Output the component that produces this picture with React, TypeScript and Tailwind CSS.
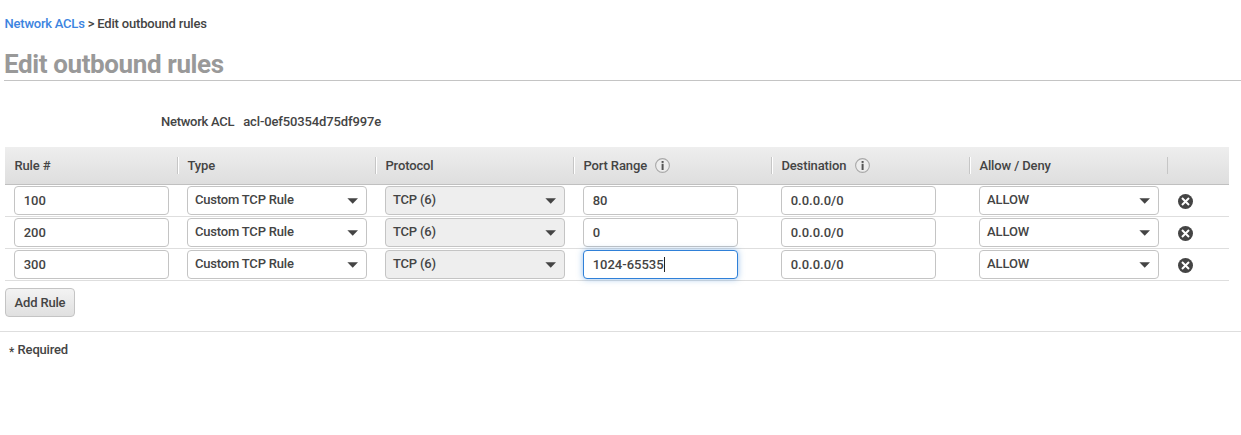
import React from 'react';

const rules = [
  { id: '100', port: '80', focused: false },
  { id: '200', port: '0', focused: false },
  { id: '300', port: '1024-65535', focused: true },
];

const GRID = 'grid w-[1224px] grid-cols-[173px_198px_198px_198px_198px_198px_61px]';

function InfoIcon() {
  return (
    <svg className="ml-[8.4px] size-[15px]" viewBox="0 0 15 15" fill="none">
      <circle cx="7.5" cy="7.5" r="6.9" fill="#ededed" stroke="#a8a8a8" strokeWidth="1.1" />
      <rect x="6.6" y="3" width="2" height="1.9" fill="#555" />
      <path d="M6.6 5.8H8.6V12H6.6Z" fill="#555" />
    </svg>
  );
}

function RemoveIcon() {
  return (
    <svg className="size-[15px]" viewBox="0 0 15 15" fill="none">
      <circle cx="7.5" cy="7.5" r="7.5" fill="#444" />
      <path d="M4 4L11 11M11 4L4 11" stroke="#fff" strokeWidth="2" />
    </svg>
  );
}

function HeaderCell({ label, info, separator = 'full' }: { label: string; info?: boolean; separator?: 'full' | 'gray' | 'none' }) {
  return (
    <div className="flex items-center pl-[9.4px] text-[13px] leading-[16px] tracking-[-0.12px]">
      <span>{label}</span>
      {info && <InfoIcon />}
      {separator !== 'none' && (
        <span
          className={`ml-auto h-[17px] w-px bg-[#c6c6c6] ${separator === 'full' ? 'shadow-[1px_0_0_#fff]' : ''}`}
        />
      )}
    </div>
  );
}

function Field({ value, focused }: { value: string; focused?: boolean }) {
  return (
    <div className="pl-[9px] pt-px">
      <div
        className={`flex h-[29px] w-[155px] items-center rounded-[4px] border bg-white pl-[8.7px] text-[13px] leading-[16px] ${
          focused ? 'border-[#2f80d8] shadow-[0_0_6px_rgba(47,128,216,0.5)]' : 'border-[#c4c4c4]'
        }`}
      >
        <span>{value}</span>
        {focused && <span className="h-[15px] w-px bg-[#222]" />}
      </div>
    </div>
  );
}

function Select({ value, disabled }: { value: string; disabled?: boolean }) {
  return (
    <div className="pl-[9px] pt-px">
      <div
        className={`flex h-[29px] w-[180px] items-center justify-between rounded-[4px] border border-[#c4c4c4] pl-[7px] pr-2 text-[13px] leading-[16px] ${
          disabled ? 'bg-[#eee]' : 'bg-white'
        }`}
      >
        <span className={value === 'ALLOW' ? '-mt-0.5 tracking-[-0.1px]' : '-mt-0.5 tracking-[-0.2px]'}>{value}</span>
        <svg className="mt-px h-[6px] w-[11px]" viewBox="0 0 11 6">
          <path d="M0.4 0.2H11L5.7 5.8Z" fill="#444" />
        </svg>
      </div>
    </div>
  );
}

export default function App() {
  return (
    <div className="min-h-[435px] w-[1241px] overflow-hidden whitespace-nowrap bg-white font-['Roboto',sans-serif] font-medium text-[#444]">
      <nav className="pl-[4.6px] pt-4 text-[13px] leading-[16px] tracking-[-0.18px]">
        <a className="tracking-[-0.24px] text-[#3c84e0]">Network ACLs</a> &gt; Edit outbound rules
      </nav>
      <h1 className="ml-1 mt-4 h-[33px] border-b border-[#c4c4c4] text-[26px] font-bold leading-[32px] tracking-[-0.39px] text-[#999]">
        Edit outbound rules
      </h1>
      <div className="mt-[33px] flex gap-[9px] pl-[161px] text-[13px] leading-[16px]">
        <span className="tracking-[-0.27px]">Network ACL</span>
        <span className="tracking-[-0.13px]">acl-0ef50354d75df997e</span>
      </div>

      <div className="ml-[5px] mt-[17px]">
        <div className={`${GRID} h-[38px] border-b border-[#c0c0c0] bg-linear-to-b from-[#eee] to-[#dedede]`}>
          <HeaderCell label="Rule #" />
          <HeaderCell label="Type" />
          <HeaderCell label="Protocol" />
          <HeaderCell label="Port Range" info />
          <HeaderCell label="Destination" info />
          <HeaderCell label="Allow / Deny" separator="gray" />
          <HeaderCell label="" separator="none" />
        </div>
        {rules.map((rule) => (
          <div key={rule.id} className={`${GRID} h-8 border-b border-[#dedede]`}>
            <Field value={rule.id} />
            <Select value="Custom TCP Rule" />
            <Select value="TCP (6)" disabled />
            <Field value={rule.port} focused={rule.focused} />
            <Field value="0.0.0.0/0" />
            <Select value="ALLOW" />
            <div className="pl-[10px] pt-[9px]">
              <RemoveIcon />
            </div>
          </div>
        ))}
      </div>

      <button className="ml-[5px] mt-[7px] flex h-[29px] w-[70px] items-center justify-center rounded-[4px] border border-[#c4c4c4] bg-linear-to-b from-[#f3f3f3] to-[#e0e0e0] text-[13px] leading-[16px] tracking-[-0.18px]">
        Add Rule
      </button>
      <div className="mt-[14px] flex border-t border-[#dedede] pl-[9px] pt-[10px] text-[13px] leading-[16px] tracking-[-0.18px]">
        <span className="w-[8.6px] pt-0.5 text-[12px]">*</span>
        <span>Required</span>
      </div>
    </div>
  );
}
